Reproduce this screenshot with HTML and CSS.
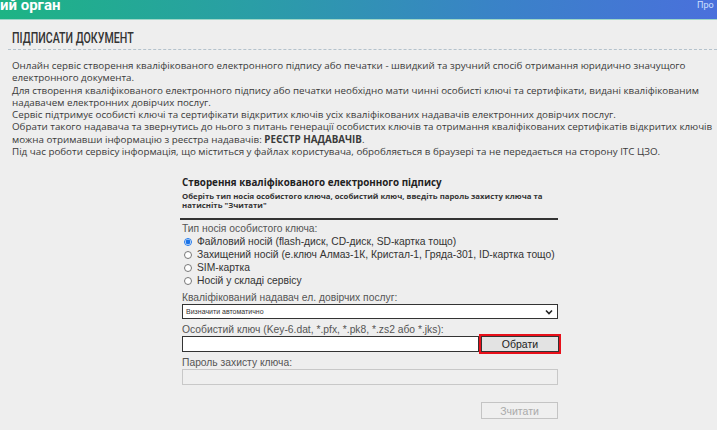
FILE: index.html
```html
<!DOCTYPE html>
<html lang="uk">
<head>
    <meta charset="UTF-8">
    <meta name="viewport" content="width=device-width, initial-scale=1.0">
    <title>Підписати документ</title>
    <link rel="stylesheet" href="styles.css">
</head>
<body>
    <header class="topbar">
        <span class="brand">ий орган</span>
        <span class="topbar-link">Про</span>
    </header>

    <main class="page">
        <h1 class="page-title"><span>Підписати документ</span></h1>

        <div class="intro">
            <p>Онлайн сервіс створення кваліфікованого електронного підпису або печатки - швидкий та зручний спосіб отримання юридично значущого електронного документа.</p>
            <p>Для створення кваліфікованого електронного підпису або печатки необхідно мати чинні особисті ключі та сертифікати, видані кваліфікованим надавачем електронних довірчих послуг.</p>
            <p>Сервіс підтримує особисті ключі та сертифікати відкритих ключів усіх кваліфікованих надавачів електронних довірчих послуг.</p>
            <p>Обрати такого надавача та звернутись до нього з питань генерації особистих ключів та отримання кваліфікованих сертифікатів відкритих ключів можна отримавши інформацію з реєстра надавачів: <b>РЕЄСТР НАДАВАЧІВ</b>.</p>
            <p>Під час роботи сервісу інформація, що міститься у файлах користувача, обробляється в браузері та не передається на сторону ІТС ЦЗО.</p>
        </div>

        <div class="sign-form">
            <div class="form-title">Створення кваліфікованого електронного підпису</div>
            <div class="form-hint">Оберіть тип носія особистого ключа, особистий ключ, введіть пароль захисту ключа та натисніть "Зчитати"</div>

            <div class="field-label first">Тип носія особистого ключа:</div>
            <label class="radio-row"><input type="radio" name="kt" checked> Файловий носій (flash-диск, CD-диск, SD-картка тощо)</label>
            <label class="radio-row"><input type="radio" name="kt"> Захищений носій (е.ключ Алмаз-1К, Кристал-1, Гряда-301, ID-картка тощо)</label>
            <label class="radio-row"><input type="radio" name="kt"> SIM-картка</label>
            <label class="radio-row"><input type="radio" name="kt"> Носій у складі сервісу</label>

            <div class="field-label">Кваліфікований надавач ел. довірчих послуг:</div>
            <div class="select-box">
                <span>Визначити автоматично</span>
                <svg class="chevron" width="8" height="6" viewBox="0 0 8 6"><path d="M1 1.5 L4 4.5 L7 1.5" fill="none" stroke="#222" stroke-width="1.6"/></svg>
            </div>

            <div class="field-label">Особистий ключ (Key-6.dat, *.pfx, *.pk8, *.zs2 або *.jks):</div>
            <div class="file-row">
                <div class="text-box"></div>
                <div class="pick-wrap"><button class="pick-btn">Обрати</button></div>
            </div>

            <div class="field-label">Пароль захисту ключа:</div>
            <div class="text-box disabled"></div>

            <div class="actions">
                <button class="read-btn" disabled>Зчитати</button>
            </div>
        </div>
    </main>
</body>
</html>
```

FILE: styles.css
```css
body {
    margin: 0;
    background: #eeeeee;
    font-family: 'Open Sans', 'DejaVu Sans', sans-serif;
    color: #333;
}

.topbar {
    height: 19px;
    background: linear-gradient(90deg, #1db484 0%, #2a9ea6 35%, #3a82c8 70%, #4a70dc 100%);
    border-bottom: 1px solid #9fd6c8;
    display: flex;
    justify-content: space-between;
    align-items: flex-start;
    overflow: hidden;
    color: #fff;
}

.brand {
    font-family: 'Roboto', sans-serif;
    font-weight: bold;
    font-size: 15px;
    line-height: 12px;
    margin-top: -1px;
}

.topbar-link {
    font-family: 'Roboto', sans-serif;
    font-size: 9px;
    line-height: 10px;
    color: #cfe0ff;
    width: 20px;
}

.page {
    padding: 0 0 0 8px;
}

.page-title {
    margin: 10px 0 0;
    padding: 0 4px 2px;
    font-family: 'Roboto', sans-serif;
    font-size: 14px;
    font-weight: 500;
    line-height: 17px;
    text-transform: uppercase;
    color: #333;
    border-bottom: 1px dashed #b4c2cc;
}

.page-title span {
    display: inline-block;
    transform: scaleX(0.76);
    transform-origin: left center;
}

.intro {
    padding: 10px 4px 0;
    font-size: 9.8px;
    line-height: 12.3px;
    color: #3a3a3a;
}

.intro p {
    margin: 0;
}

.sign-form {
    width: 378px;
    margin: 18px 0 0 172px;
    font-family: 'Liberation Sans', Arial, sans-serif;
}

.form-title {
    font-family: 'Open Sans', sans-serif;
    font-weight: bold;
    font-size: 9.8px;
    line-height: 13px;
    color: #222;
    padding-left: 2px;
}

.form-hint {
    font-family: 'Open Sans', sans-serif;
    font-weight: bold;
    font-size: 7.8px;
    line-height: 9px;
    color: #333;
    margin-top: 3px;
    padding: 0 2px 8px;
    border-bottom: 2px solid #333;
}

.field-label {
    font-size: 10.3px;
    line-height: 13px;
    color: #555;
    padding-left: 2px;
    margin-top: 4px;
}

.field-label.first {
    margin-top: 2px;
}

.radio-row {
    display: flex;
    align-items: center;
    height: 13px;
    font-size: 10.3px;
    line-height: 13px;
    color: #333;
    padding-left: 4px;
}

.radio-row input {
    width: 8px;
    height: 8px;
    margin: 0 5px 0 0;
    accent-color: #1a73e8;
}

.select-box {
    height: 13px;
    margin-left: 2px;
    background: #fff;
    border: 1px solid #333;
    display: flex;
    align-items: center;
    justify-content: space-between;
    padding: 0 4px 0 3px;
    font-size: 7px;
    color: #333;
}

.file-row {
    display: flex;
    margin-left: 2px;
}

.text-box {
    height: 14px;
    background: #fff;
    border: 1px solid #333;
    margin-left: 2px;
}

.file-row .text-box {
    flex: 1;
    margin-left: 0;
}

.text-box.disabled {
    background: #efefef;
    border-color: #c8c8c8;
}

.pick-wrap {
    border: 2px solid #e8101a;
    margin: -2px -3px -2px 0;
}

.pick-btn {
    display: block;
    width: 78px;
    height: 16px;
    margin: 0;
    padding: 0;
    background: #e3e3e3;
    border: 1px solid #333;
    font-family: 'Liberation Sans', Arial, sans-serif;
    font-size: 10.5px;
    color: #222;
}

.actions {
    display: flex;
    justify-content: flex-end;
    margin-top: 17px;
}

.read-btn {
    width: 77px;
    height: 17px;
    padding: 0;
    background: #efefef;
    border: 1px solid #c4c4c4;
    font-family: 'Liberation Sans', Arial, sans-serif;
    font-size: 10.5px;
    color: #aaa;
}
```
